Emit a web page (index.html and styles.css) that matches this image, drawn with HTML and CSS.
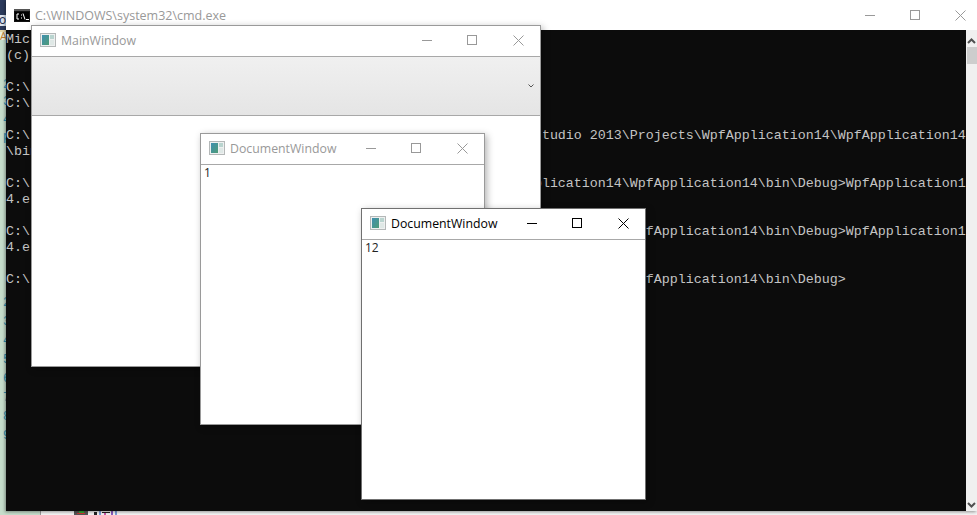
FILE: index.html
```html
<!DOCTYPE html>
<html lang="en">
<head>
<meta charset="utf-8">
<title>Windows</title>
<link rel="stylesheet" href="styles.css">
</head>
<body>
<div class="desktop">
  <div class="ide-top"><span class="ide-char">o.</span><span class="ide-a">A</span></div>
  <div class="gutter">
    <span class="num n1">2</span><span class="num n2">3</span><span class="num n3">4</span><span class="num n4">p</span><span class="num n5">2</span><span class="num n6">3</span><span class="num n7">4</span><span class="num n8">5</span><span class="num n9">6</span><span class="num n10">7</span><span class="num n11">8</span><span class="num n12">9</span>
  </div>
  <div class="ide-bottom">
    <svg class="tiles" width="46" height="6" viewBox="0 0 46 6"><rect x="0" y="0" width="14" height="6" fill="#555"/><rect x="3" y="2" width="8" height="1" fill="#c33"/><rect x="5" y="0" width="5" height="2" fill="#3a3"/><rect x="20" y="1" width="3" height="5" fill="#222"/><rect x="25" y="0" width="2" height="6" fill="#7c9ed8"/><rect x="28" y="1" width="8" height="1" fill="#222"/><rect x="30" y="2" width="2" height="4" fill="#c5a"/><rect x="37" y="0" width="2" height="6" fill="#8a5cc0"/><rect x="41" y="0" width="2" height="6" fill="#7c9ed8"/></svg>
  </div>

  <section class="console-win">
    <header class="console-title">
      <svg class="cmd-icon" width="16" height="13" viewBox="0 0 16 13"><rect width="16" height="13" fill="#111"/><rect x="0" y="0" width="16" height="2" fill="#555"/><rect x="1" y="3" width="14" height="9" fill="#000"/><path d="M5 5H3v5h2M7 6h1M7 9h1M9 4.500l2 6M12 10.500h3" fill="none" stroke="#fff" stroke-width="1"/></svg>
      <span class="console-name">C:\WINDOWS\system32\cmd.exe</span>
      <span class="console-controls">
        <svg width="11" height="11" viewBox="0 0 11 11"><path d="M0 5.500H10" stroke="#999"/></svg>
        <svg width="11" height="11" viewBox="0 0 11 11"><rect x="0.500" y="0.500" width="9" height="9" fill="none" stroke="#999"/></svg>
        <svg width="11" height="11" viewBox="0 0 11 11"><path d="M0.500 0.500L10.500 10.500M10.500 0.500L0.500 10.500" stroke="#999"/></svg>
      </span>
    </header>
    <div class="console-body">
      <pre class="console-text">Microsoft
(c)

C:\
C:\

C:\                                                                tudio 2013\Projects\WpfApplication14\WpfApplication14
\bin

C:\                                                               plication14\WpfApplication14\bin\Debug&gt;WpfApplication1
4.e

C:\                                                               plication14\WpfApplication14\bin\Debug&gt;WpfApplication1
4.e

C:\                                                               plication14\WpfApplication14\bin\Debug&gt;</pre>
      <div class="scrollbar">
        <svg width="9" height="6" viewBox="0 0 9 6"><path d="M1 5L4.500 1.500L8 5" fill="none" stroke="#505050" stroke-width="2"/></svg>
        <div class="thumb"></div>
        <svg class="sb-down" width="9" height="6" viewBox="0 0 9 6"><path d="M1 1L4.500 4.500L8 1" fill="none" stroke="#505050" stroke-width="2"/></svg>
      </div>
    </div>
  </section>

  <section class="win win-main inactive">
    <header class="win-title">
      <svg class="app-icon" width="16" height="16" viewBox="0 0 16 16"><defs><linearGradient id="g1" x1="0" y1="0" x2="1" y2="1"><stop offset="0" stop-color="#3f8fb0"/><stop offset="1" stop-color="#4f9c78"/></linearGradient></defs><rect x="0.500" y="1.500" width="15" height="13" fill="#eef0f0" stroke="#b4b8b8"/><rect x="2" y="3" width="7" height="10" fill="url(#g1)"/><rect x="10" y="3" width="4" height="4" fill="#b9d4cf"/><rect x="10" y="8" width="4" height="5" fill="#dfe8e6"/></svg>
      <span class="win-name">MainWindow</span>
      <span class="win-controls">
        <svg width="11" height="11" viewBox="0 0 11 11"><path d="M1 5.500H11" class="glyph"/></svg>
        <svg width="11" height="11" viewBox="0 0 11 11"><rect x="0.500" y="0.500" width="9" height="9" class="glyph"/></svg>
        <svg width="11" height="11" viewBox="0 0 11 11"><path d="M0.500 0.500L10.500 10.500M10.500 0.500L0.500 10.500" class="glyph"/></svg>
      </span>
    </header>
    <div class="combo">
      <svg width="6" height="4" viewBox="0 0 6 4"><path d="M0.500 0.500L3 3L5.500 0.500" fill="none" stroke="#555"/></svg>
    </div>
  </section>

  <section class="win win-doc1 inactive">
    <header class="win-title">
      <svg class="app-icon" width="16" height="16" viewBox="0 0 16 16"><rect x="0.500" y="1.500" width="15" height="13" fill="#eef0f0" stroke="#b4b8b8"/><rect x="2" y="3" width="7" height="10" fill="url(#g1)"/><rect x="10" y="3" width="4" height="4" fill="#b9d4cf"/><rect x="10" y="8" width="4" height="5" fill="#dfe8e6"/></svg>
      <span class="win-name">DocumentWindow</span>
      <span class="win-controls">
        <svg width="11" height="11" viewBox="0 0 11 11"><path d="M1 5.500H11" class="glyph"/></svg>
        <svg width="11" height="11" viewBox="0 0 11 11"><rect x="0.500" y="0.500" width="9" height="9" class="glyph"/></svg>
        <svg width="11" height="11" viewBox="0 0 11 11"><path d="M0.500 0.500L10.500 10.500M10.500 0.500L0.500 10.500" class="glyph"/></svg>
      </span>
    </header>
    <div class="doc-text">1</div>
  </section>

  <section class="win win-doc2">
    <header class="win-title">
      <svg class="app-icon" width="16" height="16" viewBox="0 0 16 16"><rect x="0.500" y="1.500" width="15" height="13" fill="#eef0f0" stroke="#b4b8b8"/><rect x="2" y="3" width="7" height="10" fill="url(#g1)"/><rect x="10" y="3" width="4" height="4" fill="#b9d4cf"/><rect x="10" y="8" width="4" height="5" fill="#dfe8e6"/></svg>
      <span class="win-name">DocumentWindow</span>
      <span class="win-controls">
        <svg width="11" height="11" viewBox="0 0 11 11"><path d="M1 5.500H11" class="glyph"/></svg>
        <svg width="11" height="11" viewBox="0 0 11 11"><rect x="0.500" y="0.500" width="9" height="9" class="glyph"/></svg>
        <svg width="11" height="11" viewBox="0 0 11 11"><path d="M0.500 0.500L10.500 10.500M10.500 0.500L0.500 10.500" class="glyph"/></svg>
      </span>
    </header>
    <div class="doc-text">12</div>
  </section>
</div>
</body>
</html>
```

FILE: styles.css
```css
html, body {
  margin: 0;
  padding: 0;
}

body {
  font-family: "Open Sans", "Noto Sans", sans-serif;
  overflow: hidden;
}

.desktop {
  position: relative;
  width: 977px;
  height: 515px;
  overflow: hidden;
  background: #ececec;
}

.ide-top {
  position: absolute;
  left: 0;
  top: 0;
  width: 6px;
  height: 40px;
  background: linear-gradient(#2b3a5c 0 15px, #dce4ee 15px 26px, #2b3a5c 26px 30px, #e8d9a8 30px 32px, #eef0e0 32px);
  overflow: hidden;
}

.ide-char {
  position: absolute;
  left: -1px;
  top: 13px;
  font-size: 12px;
  line-height: 14px;
  color: #1a2a4a;
}

.ide-a {
  position: absolute;
  left: 0;
  top: 32px;
  font-size: 11px;
  line-height: 8px;
  color: #c08030;
}

.gutter {
  position: absolute;
  left: 0;
  top: 40px;
  width: 6px;
  height: 475px;
  background: #c6ddcb;
  overflow: hidden;
}

.num {
  position: absolute;
  left: 3px;
  font-family: "Liberation Mono", monospace;
  font-size: 12px;
  line-height: 14px;
  color: #2b8fb0;
}

.n1 { top: 38px; }
.n2 { top: 55px; }
.n3 { top: 73px; }
.n4 { top: 90px; }
.n5 { top: 256px; }
.n6 { top: 275px; }
.n7 { top: 294px; }
.n8 { top: 313px; }
.n9 { top: 332px; }
.n10 { top: 351px; }
.n11 { top: 370px; }
.n12 { top: 389px; }

.ide-bottom {
  position: absolute;
  left: 0;
  top: 511px;
  width: 977px;
  height: 4px;
  display: flex;
  background: linear-gradient(90deg, #c6ddcb 0 40px, #9a9a9a 40px 41px, #f4f4f4 41px);
}

.tiles {
  margin-left: 74px;
}

.console-win {
  position: absolute;
  left: 6px;
  top: 0;
  width: 971px;
  height: 511px;
  display: flex;
  flex-direction: column;
  background: #fff;
  box-shadow: -1px 1px 3px rgba(0, 0, 0, 0.4);
}

.console-title {
  flex: 0 0 30px;
  display: flex;
  align-items: center;
  padding-left: 8px;
}

.cmd-icon {
  margin-right: 5px;
}

.console-name {
  font-size: 12.5px;
  color: #999;
}

.console-controls {
  margin-left: auto;
  margin-right: 11px;
  display: flex;
  gap: 34px;
}

.console-body {
  flex: 1;
  display: flex;
  min-height: 0;
}

.console-text {
  flex: 0 0 960px;
  margin: 0;
  padding-top: 2px;
  background: #0c0c0c;
  color: #c4c4c4;
  font-family: "Liberation Mono", monospace;
  font-size: 13.33px;
  line-height: 16px;
  overflow: hidden;
}

.scrollbar {
  flex: 1;
  display: flex;
  flex-direction: column;
  padding-top: 8px;
  padding-left: 1px;
  background: #f0f0f0;
}

.thumb {
  height: 17px;
  margin-top: 3px;
  background: #cdcdcd;
}

.sb-down {
  margin-top: auto;
  margin-bottom: 3px;
}

.win {
  position: absolute;
  box-sizing: border-box;
  display: flex;
  flex-direction: column;
  background: #fff;
  border: 1px solid #9a9a9a;
  box-shadow: 2px 2px 7px rgba(0, 0, 0, 0.3);
}

.win-main {
  left: 31px;
  top: 25px;
  width: 510px;
  height: 342px;
}

.win-doc1 {
  left: 200px;
  top: 133px;
  width: 285px;
  height: 292px;
}

.win-doc2 {
  left: 361px;
  top: 208px;
  width: 285px;
  height: 292px;
  border-color: #707070;
}

.win-title {
  flex: 0 0 31px;
  display: flex;
  align-items: center;
  box-sizing: border-box;
  padding-left: 8px;
  padding-bottom: 2px;
  border-bottom: 1px solid #a8a8a8;
}

.win-main .win-title {
  flex-basis: 30px;
  border-bottom: 0;
}

.app-icon {
  margin-right: 5px;
}

.win-name {
  font-size: 12.3px;
  color: #000;
}

.inactive .win-name {
  color: #999;
}

.win-controls {
  margin-left: auto;
  margin-right: 16px;
  display: flex;
  gap: 35px;
}

.glyph {
  fill: none;
  stroke: #000;
}

.inactive .glyph {
  stroke: #999;
}

.combo {
  flex: 0 0 60px;
  box-sizing: border-box;
  display: flex;
  align-items: center;
  justify-content: flex-end;
  padding-right: 6px;
  border-top: 1px solid #a8a8a8;
  border-bottom: 1px solid #a8a8a8;
  background: linear-gradient(#f0f0f0, #e5e5e5);
}

.doc-text {
  padding: 0 3px;
  font-size: 12px;
  line-height: 16px;
  color: #222;
}
```
